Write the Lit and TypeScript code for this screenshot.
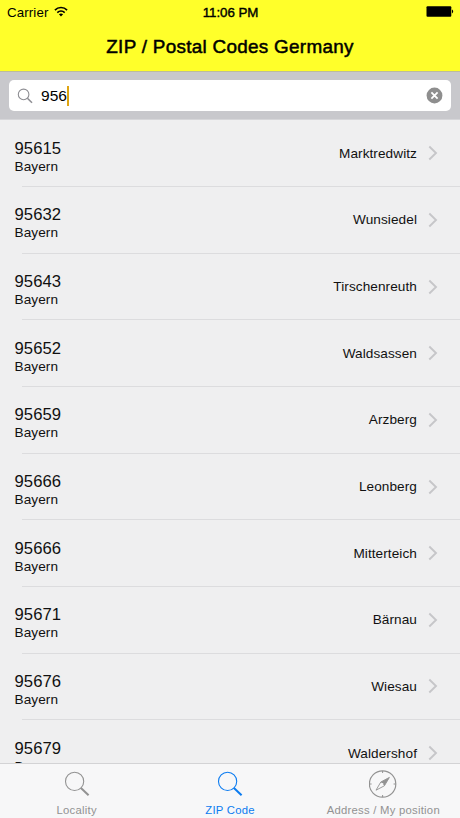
import { LitElement, html, css, svg } from "lit";
import { customElement, property } from "lit/decorators.js";

interface Place {
  code: string;
  state: string;
  town: string;
}

const PLACES: Place[] = [
  { code: "95615", state: "Bayern", town: "Marktredwitz" },
  { code: "95632", state: "Bayern", town: "Wunsiedel" },
  { code: "95643", state: "Bayern", town: "Tirschenreuth" },
  { code: "95652", state: "Bayern", town: "Waldsassen" },
  { code: "95659", state: "Bayern", town: "Arzberg" },
  { code: "95666", state: "Bayern", town: "Leonberg" },
  { code: "95666", state: "Bayern", town: "Mitterteich" },
  { code: "95671", state: "Bayern", town: "Bärnau" },
  { code: "95676", state: "Bayern", town: "Wiesau" },
  { code: "95679", state: "Bayern", town: "Waldershof" },
];

@customElement("place-row")
export class PlaceRow extends LitElement {
  @property({ attribute: false }) place!: Place;

  static styles = css`
    :host {
      display: flex;
      align-items: center;
      position: relative;
      height: 66.67px;
      box-sizing: border-box;
      padding: 0 22px 0 14.5px;
      color: #111;
    }
    .left {
      flex: 1;
      padding-top: 7px;
    }
    .code {
      font-size: 16.67px;
      line-height: 19px;
      letter-spacing: 0.08px;
    }
    .state {
      font-size: 13.6px;
      line-height: 18px;
      letter-spacing: 0.08px;
    }
    .town {
      font-size: 13.6px;
      line-height: 18px;
      letter-spacing: 0.08px;
      margin-right: 11px;
    }
    .chevron {
      width: 10px;
      height: 16px;
      display: block;
      margin-bottom: 1px;
    }
    .rule {
      position: absolute;
      left: 22px;
      right: 0;
      bottom: 0;
      height: 1px;
      background: #dcdcde;
    }
  `;

  render() {
    return html`
      <div class="left">
        <div class="code">${this.place.code}</div>
        <div class="state">${this.place.state}</div>
      </div>
      <div class="town">${this.place.town}</div>
      <svg class="chevron" viewBox="0 0 10 16" fill="none">
        <path d="M1.3 1.5 8 8 1.3 14.5" stroke="#c6c6c9" stroke-width="1.9" />
      </svg>
      <div class="rule"></div>
    `;
  }
}

const magnifier = svg`
  <circle cx="11.6" cy="11.4" r="9.1" stroke="currentColor" stroke-width="1.1" />
  <path d="M17.9 18 25.6 25.3" stroke="currentColor" stroke-width="2" />
`;

const compass = svg`
  <circle cx="13.6" cy="14" r="13.2" stroke="currentColor" stroke-width="1.2" />
  <path d="M13.6 1v2M13.6 25v2M0.6 14h2M24.6 14h2" stroke="currentColor" stroke-width="1" />
  <path d="M20.4 7.4 11.8 12 7 20.2 15.4 15.8Z" stroke="currentColor" stroke-width="0.9" />
  <path d="M20.4 7.4 11.8 12 15.4 15.8Z" fill="currentColor" />
  <circle cx="13.6" cy="13.9" r="0.8" fill="#f7f7f7" />
`;

@customElement("app-root")
export class AppRoot extends LitElement {
  static styles = css`
    :host {
      display: flex;
      flex-direction: column;
      height: 818px;
      width: 460px;
      overflow: hidden;
      background: #efeff0;
      font-family: "Liberation Sans", Arial, sans-serif;
      color: #000;
      white-space: nowrap;
    }
    svg {
      display: block;
      flex: none;
    }
    .head {
      flex: none;
      height: 71px;
      background: #ffff2a;
    }
    .status {
      display: grid;
      grid-template-columns: 1fr auto 1fr;
      align-items: center;
      height: 24px;
      padding: 0 6px 0 7px;
      font-size: 13.33px;
    }
    .carrier {
      display: flex;
      align-items: center;
      gap: 6px;
      letter-spacing: 0.1px;
    }
    .carrier svg {
      margin-bottom: 2px;
    }
    .time {
      -webkit-text-stroke: 0.4px #000;
      letter-spacing: -0.05px;
    }
    .battery {
      justify-self: end;
      margin-bottom: 1px;
    }
    .title {
      text-align: center;
      font-size: 18.89px;
      line-height: 46px;
      letter-spacing: 0.29px;
      -webkit-text-stroke: 0.5px #000;
    }
    .searchbar {
      flex: none;
      box-sizing: border-box;
      height: 49.4px;
      padding: 8px 9px 0;
      background: #c8c8cc;
      border-top: 1px solid #bcbc9c;
      border-bottom: 1px solid #d6d6d9;
    }
    .field {
      display: flex;
      align-items: center;
      height: 31px;
      padding: 0 8px 0 8px;
      border-radius: 5px;
      background: #fff;
      box-sizing: border-box;
    }
    .query {
      margin-left: 8px;
      font-size: 15.56px;
      line-height: 20px;
    }
    .caret {
      width: 2px;
      height: 20px;
      background: #dfa512;
    }
    .clear {
      margin-left: auto;
    }
    .list {
      flex: 1;
      min-height: 0;
      overflow: hidden;
    }
    .tabs {
      flex: none;
      display: grid;
      grid-template-columns: repeat(3, 1fr);
      height: 55px;
      box-sizing: border-box;
      border-top: 1px solid #d3d3d5;
      background: #f7f7f8;
      color: #929292;
    }
    .tab {
      display: flex;
      flex-direction: column;
      align-items: center;
      padding-top: 6px;
      font-size: 11.3px;
      line-height: 14px;
      letter-spacing: 0.25px;
    }
    .tab svg {
      margin-bottom: 5px;
    }
    .tab.active {
      color: #0b7bf0;
    }
  `;

  render() {
    return html`
      <div class="head">
        <div class="status">
          <div class="carrier">
            <span>Carrier</span>
            <svg width="14" height="11" viewBox="0 0 14 11" fill="none" stroke="#000" stroke-width="1.6">
              <path d="M0.9 4.1C4.3 0.7 9.7 0.7 13.1 4.1" />
              <path d="M3.3 6.6C5.4 4.6 8.6 4.6 10.7 6.6" />
              <path d="M7 10.4 4.9 8.2C6.1 7.2 7.9 7.2 9.1 8.2Z" fill="#000" stroke="none" />
            </svg>
          </div>
          <div class="time">11:06 PM</div>
          <svg class="battery" width="28" height="11" viewBox="0 0 28 11">
            <rect x="0.5" y="0.3" width="24.8" height="10.4" rx="1" />
            <path d="M26 3.6C27.6 4.1 27.6 6.9 26 7.4Z" />
          </svg>
        </div>
        <div class="title">ZIP / Postal Codes Germany</div>
      </div>
      <div class="searchbar">
        <div class="field">
          <svg width="16" height="16" viewBox="0 0 16 16" fill="none" stroke="#8e8e93">
            <circle cx="6.6" cy="6.4" r="5.3" stroke-width="1.1" />
            <path d="M10.4 10.3 15 14.8" stroke-width="1.6" />
          </svg>
          <div class="query">956</div>
          <div class="caret"></div>
          <svg class="clear" width="17" height="17" viewBox="0 0 17 17">
            <circle cx="8.5" cy="8.5" r="7.9" fill="#8e8e8e" />
            <path d="M5.4 5.4l6.2 6.2M11.6 5.4l-6.2 6.2" stroke="#fff" stroke-width="1.8" />
          </svg>
        </div>
      </div>
      <div class="list">
        ${PLACES.map((p) => html`<place-row .place=${p}></place-row>`)}
      </div>
      <div class="tabs">
        <div class="tab">
          <svg width="28" height="28" viewBox="0 0 28 28" fill="none">${magnifier}</svg>
          <span>Locality</span>
        </div>
        <div class="tab active">
          <svg width="28" height="28" viewBox="0 0 28 28" fill="none">${magnifier}</svg>
          <span>ZIP Code</span>
        </div>
        <div class="tab">
          <svg width="28" height="28" viewBox="0 0 28 28" fill="none">${compass}</svg>
          <span>Address / My position</span>
        </div>
      </div>
    `;
  }
}
